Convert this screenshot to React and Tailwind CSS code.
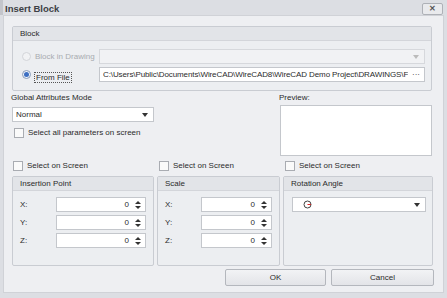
import React from 'react';

const font = { fontFamily: '"Liberation Sans", Arial, sans-serif' };

// small helpers for the WinForms-ish look
const Check = ({ label, className = '' }) => (
    <div className={`flex items-center gap-[4px] ${className}`}>
        <div className="w-[10px] h-[10px] border border-[#a9acb2] bg-[#fafafa]" />
        <span className="text-[8px] text-[#2b2b2b] leading-none">{label}</span>
    </div>
);

const Arrow = () => (
    <svg width="6" height="4" viewBox="0 0 6 4"><path d="M0 0h6L3 4z" fill="#333" /></svg>
);

const Spin = () => (
    <svg width="6" height="10" viewBox="0 0 6 10">
        <path d="M0 4L3 1 6 4z" fill="#333" />
        <path d="M0 6h6L3 9z" fill="#333" />
    </svg>
);

const Group = ({ title, className = '', children }) => (
    <div className={`border border-[#c9ccd2] rounded-[2px] bg-[#eceef1] flex flex-col ${className}`}>
        <div className="h-[14px] bg-[#e2e4e8] border-b border-[#d3d5da] flex items-center pl-[7px] text-[8px] text-[#2b2b2b] leading-none">
            {title}
        </div>
        {children}
    </div>
);

const NumRow = ({ label, inputW }) => (
    <div className="flex items-center h-[15px]">
        <span className="w-[36px] text-[8px] text-[#2b2b2b] leading-none">{label}</span>
        <div className={`h-[15px] ${inputW} bg-white border border-[#c4c7cc] flex items-center justify-end pr-[4px] gap-[6px]`}>
            <span className="text-[8px] text-[#2b2b2b] leading-none">0</span>
            <Spin />
        </div>
    </div>
);

export default function App() {
    return (
        <div style={font} className="w-[447px] h-[298px] bg-[#b3b5bb] flex flex-col">
            {/* title bar */}
            <div className="h-[15px] bg-[#dcdee3] flex items-center justify-between pl-[2px] pr-[4px] border-l-[3px] border-[#c3c5cb]">
                <span className="text-[9.5px] font-bold text-[#3c3f45] leading-none mt-[2px]">Insert Block</span>
                <div className="w-[21px] h-[12px] mt-[3px] border border-[#aeb1b7] rounded-[2px] bg-[#e9eaed] flex items-center justify-center text-[8px] font-bold text-[#555] leading-none">
                    ✕
                </div>
            </div>

            <div className="flex-1 flex pb-[5px] pl-[3px] pr-[3px] bg-[#dcdee3]">
                <div className="flex-1 bg-[#eeeff2] border border-[#d0d2d7] relative pl-[8px] pr-[9px] pt-[10px] flex flex-col">
                    {/* Block group */}
                    <Group title="Block" className="h-[65px] w-[420px]">
                        <div className="flex flex-col pl-[9px] pt-[8px] gap-[3px]">
                            <div className="flex items-center h-[15px]">
                                <div className="w-[9px] h-[9px] rounded-full border border-[#d3d5d9] bg-[#f1f2f4]" />
                                <span className="ml-[4px] w-[64px] text-[8px] text-[#a8abb0] leading-none whitespace-nowrap">Block in Drawing</span>
                                <div className="w-[326px] h-[15px] border border-[#d6d8dc] bg-[#f1f2f4] flex items-center justify-end pr-[5px]">
                                    <svg width="6" height="4" viewBox="0 0 6 4"><path d="M0 0h6L3 4z" fill="#bbb" /></svg>
                                </div>
                            </div>
                            <div className="flex items-center h-[15px]">
                                <div className="w-[9px] h-[9px] rounded-full border border-[#8a9bb8] bg-[#eef3fb] flex items-center justify-center">
                                    <div className="w-[5px] h-[5px] rounded-full bg-[#3d6fc2]" />
                                </div>
                                <div className="ml-[3px] w-[65px]">
                                    <span className="border border-dotted border-[#555] px-[1px] text-[8px] text-[#2b2b2b] leading-none">From File</span>
                                </div>
                                <div className="w-[326px] h-[15px] border border-[#c4c7cc] bg-white flex items-center pl-[3px] pr-[4px] gap-[4px]">
                                    <span className="flex-1 text-[8px] text-[#2b2b2b] leading-none whitespace-nowrap overflow-hidden tracking-[-0.1px]">
                                        C:\Users\Public\Documents\WireCAD\WireCAD8\WireCAD Demo Project\DRAWINGS\F
                                    </span>
                                    <span className="text-[8px] text-[#2b2b2b] leading-none">···</span>
                                </div>
                            </div>
                        </div>
                    </Group>

                    {/* middle row */}
                    <div className="flex h-[68px]">
                        <div className="flex flex-col w-[143px] -ml-[1px]">
                            <span className="text-[8px] text-[#2b2b2b] leading-none mt-[3px]">Global Attributes Mode</span>
                            <div className="mt-[5px] h-[15px] ml-[1px] bg-white border border-[#c4c7cc] flex items-center justify-between pl-[3px] pr-[5px]">
                                <span className="text-[8px] text-[#2b2b2b] leading-none">Normal</span>
                                <Arrow />
                            </div>
                            <Check label="Select all parameters on screen" className="mt-[6px] ml-[3px]" />
                        </div>
                        <div className="flex flex-col ml-[125px] w-[153px]">
                            <span className="text-[8px] text-[#2b2b2b] leading-none mt-[3px]">Preview:</span>
                            <div className="mt-[3px] h-[51px] ml-[1px] bg-white border border-[#c4c7cc]" />
                        </div>
                    </div>

                    {/* select on screen row */}
                    <div className="flex mt-[2px] h-[10px]">
                        <Check label="Select on Screen" className="ml-[1px] w-[146px]" />
                        <Check label="Select on Screen" className="w-[126px]" />
                        <Check label="Select on Screen" />
                    </div>

                    {/* groups */}
                    <div className="flex mt-[5px] gap-[3px]">
                        <Group title="Insertion Point" className="w-[142px] h-[90px]">
                            <div className="flex flex-col pl-[7px] pt-[6px] gap-[3px]">
                                <NumRow label="X:" inputW="w-[90px]" />
                                <NumRow label="Y:" inputW="w-[90px]" />
                                <NumRow label="Z:" inputW="w-[90px]" />
                            </div>
                        </Group>
                        <Group title="Scale" className="w-[123px] h-[90px]">
                            <div className="flex flex-col pl-[7px] pt-[6px] gap-[3px]">
                                <NumRow label="X:" inputW="w-[71px]" />
                                <NumRow label="Y:" inputW="w-[71px]" />
                                <NumRow label="Z:" inputW="w-[71px]" />
                            </div>
                        </Group>
                        <Group title="Rotation Angle" className="w-[150px] h-[90px]">
                            <div className="pl-[8px] pt-[6px]">
                                <div className="w-[134px] h-[15px] bg-white border border-[#c4c7cc] flex items-center justify-between pl-[10px] pr-[5px]">
                                    <svg width="9" height="9" viewBox="0 0 9 9">
                                        <circle cx="4.5" cy="4.5" r="3.5" fill="none" stroke="#444" strokeWidth="1" />
                                        <path d="M4.5 4.5h3.5" stroke="#d22" strokeWidth="1" />
                                    </svg>
                                    <Arrow />
                                </div>
                            </div>
                        </Group>
                    </div>

                    {/* buttons */}
                    <div className="flex justify-end mt-[3px] gap-[5px]">
                        <div className="w-[101px] h-[17px] border border-[#b4b7bd] rounded-[2px] bg-gradient-to-b from-[#f2f3f5] to-[#e3e4e8] flex items-center justify-center text-[8px] text-[#2b2b2b] leading-none">
                            OK
                        </div>
                        <div className="w-[103px] h-[17px] border border-[#b4b7bd] rounded-[2px] bg-gradient-to-b from-[#f2f3f5] to-[#e3e4e8] flex items-center justify-center text-[8px] text-[#2b2b2b] leading-none">
                            Cancel
                        </div>
                    </div>
                </div>
            </div>
        </div>
    );
}
